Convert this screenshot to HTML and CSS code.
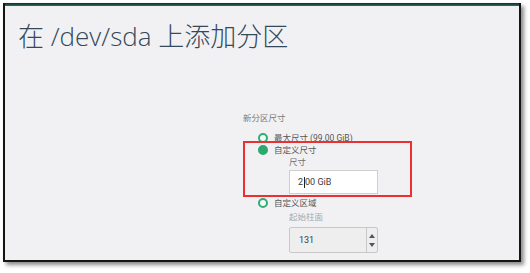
FILE: index.html
```html
<!DOCTYPE html>
<html lang="zh-CN">
<head>
<meta charset="utf-8">
<link rel="stylesheet" href="styles.css">
</head>
<body>
<div class="frame">
  <div class="topbar"></div>
  <h1 class="title">在 /dev/sda 上添加分区</h1>
  <div class="form">
    <div class="section-label">新分区尺寸</div>
    <div class="radio-row"><span class="radio"></span><span>最大尺寸 (99.00 GiB)</span></div>
    <div class="radio-row"><span class="radio checked"></span><span>自定义尺寸</span></div>
    <div class="field">
      <div class="field-label">尺寸</div>
      <div class="input"><span>2</span><span class="caret"></span><span>00 GiB</span></div>
    </div>
    <div class="radio-row"><span class="radio"></span><span>自定义区域</span></div>
    <div class="field">
      <div class="field-label light">起始柱面</div>
      <div class="input spin">
        <span class="spin-value">131</span>
        <span class="spin-arrows"><span class="up"></span><span class="down"></span></span>
      </div>
    </div>
    <div class="highlight"></div>
  </div>
</div>
</body>
</html>
```
FILE: styles.css
```css
html, body {
  margin: 0;
  padding: 0;
  background: #ffffff;
}
body {
  width: 530px;
  height: 273px;
  overflow: hidden;
  font-family: Roboto, "Noto Sans CJK SC", sans-serif;
}
.frame {
  position: relative;
  margin: 3px 0 0 3px;
  width: 514px;
  height: 257px;
  border: 2px solid #151515;
  border-top: none;
  background: #f1f1f3;
  box-shadow: 3px 3px 4px rgba(0, 0, 0, 0.45);
}
.topbar {
  height: 3px;
  background: linear-gradient(#0f2a2a, #2f6e5c);
}
.title {
  margin: 0;
  padding: 15px 0 0 13px;
  font-family: "Open Sans", "Noto Sans CJK SC", sans-serif;
  font-weight: 300;
  font-size: 26px;
  line-height: 31px;
  color: #34495a;
}
.form {
  position: relative;
  margin: 59px 0 0 238px;
  width: 200px;
  font-size: 8.5px;
  color: #666;
}
.section-label {
  height: 14px;
  line-height: 14px;
  color: #7a7a7a;
}
.radio-row {
  display: flex;
  align-items: center;
  gap: 6px;
  height: 12px;
  line-height: 12px;
  margin-left: 15px;
  color: #555;
}
.section-label + .radio-row { margin-top: 7px; }
.radio {
  box-sizing: border-box;
  width: 10px;
  height: 10px;
  border-radius: 50%;
  border: 2px solid #2eae72;
  background: #f7f7f7;
  flex: none;
}
.radio.checked {
  background: #2aa86d;
  border-color: #2aa86d;
}
.field {
  margin-left: 46px;
  padding: 0 0 3px;
}
.field-label {
  height: 12px;
  line-height: 12px;
  color: #707070;
}
.field-label.light { color: #a8a8a8; margin-top: 2px; }
.input {
  box-sizing: border-box;
  margin-top: 2px;
  width: 89px;
  height: 24px;
  border: 1px solid #cfcfcf;
  background: #ffffff;
  display: flex;
  align-items: center;
  padding-left: 8px;
  font-size: 9px;
  color: #3a3a3a;
}
.caret {
  display: inline-block;
  width: 1px;
  height: 11px;
  background: #222;
  margin: 0 0.5px;
}
.input.spin {
  height: 26px;
  margin-top: 4px;
  background: #eeeeef;
  border-color: #c8c8c8;
  border-radius: 2px;
  padding: 0;
}
.spin-value {
  flex: 1;
  padding-left: 9px;
}
.spin-arrows {
  width: 10px;
  height: 100%;
  border-left: 1px solid #c8c8c8;
  display: flex;
  flex-direction: column;
  align-items: center;
  justify-content: center;
  gap: 5px;
}
.up, .down {
  width: 0;
  height: 0;
  border-left: 3px solid transparent;
  border-right: 3px solid transparent;
}
.up { border-bottom: 4px solid #555; }
.down { border-top: 4px solid #555; }
.highlight {
  position: absolute;
  left: 0;
  top: 30px;
  width: 169px;
  height: 56px;
  box-sizing: border-box;
  border: 2px solid #ec2f33;
}
```
